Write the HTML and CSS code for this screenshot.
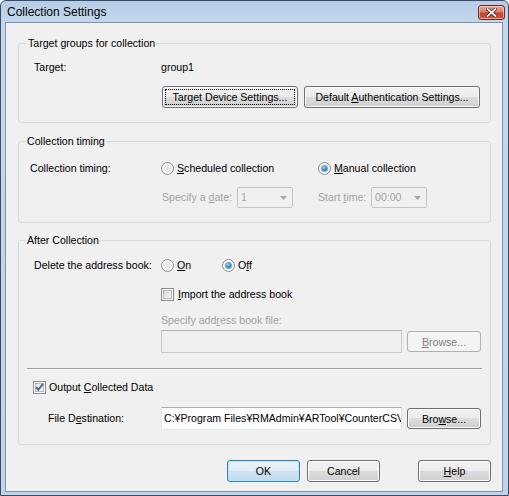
FILE: index.html
```html
<!DOCTYPE html>
<html lang="en">
<head>
<meta charset="utf-8">
<title>Collection Settings</title>
<link rel="stylesheet" href="styles.css">
</head>
<body>
<div class="window">
  <div class="titlebar">
    <span class="title">Collection Settings</span>
    <span class="close">
      <svg width="11" height="9" viewBox="0 0 11 9"><path d="M1.5 1 L9.5 8 M9.5 1 L1.5 8" stroke="#4a2222" stroke-width="3.4" stroke-linecap="square"/><path d="M1.5 1 L9.5 8 M9.5 1 L1.5 8" stroke="#ffffff" stroke-width="1.7" stroke-linecap="square"/></svg>
    </span>
  </div>
  <div class="client">
    <fieldset class="group g-target">
      <legend>Target groups for collection</legend>
      <div class="row r-target">
        <span class="lbl l-target">Target:</span>
        <span>group1</span>
      </div>
      <div class="row r-btns">
        <button class="btn focus w-device">Tar<u>g</u>et Device Settings...</button>
        <button class="btn w-auth">Default <u>A</u>uthentication Settings...</button>
      </div>
    </fieldset>

    <fieldset class="group g-timing">
      <legend>Collection timing</legend>
      <div class="row r-timing">
        <span class="lbl l-timing">Collection timing:</span>
        <span class="opt w-sched"><span class="radio"></span><span class="opt-text"><u>S</u>cheduled collection</span></span>
        <span class="opt"><span class="radio on"></span><span class="opt-text"><u>M</u>anual collection</span></span>
      </div>
      <div class="row r-date">
        <span class="opt w-sched dis">
          <span class="date-lbl">Specify a <u>d</u>ate:</span>
          <span class="combo"><span>1</span><svg width="7" height="4" viewBox="0 0 7 4"><path d="M0 0H7L3.5 4Z" fill="#a9a9a9"/></svg></span>
        </span>
        <span class="opt dis">
          <span class="time-lbl">Start <u>t</u>ime:</span>
          <span class="combo"><span>00:00</span><svg width="7" height="4" viewBox="0 0 7 4"><path d="M0 0H7L3.5 4Z" fill="#a9a9a9"/></svg></span>
        </span>
      </div>
    </fieldset>

    <fieldset class="group g-after">
      <legend>After Collection</legend>
      <div class="row r-delete">
        <span class="lbl l-delete">Delete the address book:</span>
        <span class="opt w-on"><span class="radio"></span><span class="opt-text"><u>O</u>n</span></span>
        <span class="opt"><span class="radio on"></span><span class="opt-text">O<u>f</u>f</span></span>
      </div>
      <div class="row r-import indent">
        <span class="opt"><span class="check"></span><span class="opt-text chk-text"><u>I</u>mport the address book</span></span>
      </div>
      <div class="row r-spec indent dis">Specify add<u>r</u>ess book file:</div>
      <div class="row r-file indent">
        <span class="textbox disabled"></span>
        <button class="btn browse" disabled><u>B</u>rowse...</button>
      </div>
      <div class="sep"></div>
      <div class="row r-output">
        <span class="opt"><span class="check checked"><svg width="11" height="11" viewBox="0 0 11 11"><path d="M2 5.2 L4.4 7.8 L9 1.8" fill="none" stroke="#4f66a0" stroke-width="2"/></svg></span><span class="opt-text">Output <u>C</u>ollected Data</span></span>
      </div>
      <div class="row r-dest">
        <span class="lbl l-dest">File D<u>e</u>stination:</span>
        <span class="textbox"><span class="tb-text">C:¥Program Files¥RMAdmin¥ARTool¥CounterCSV</span></span>
        <button class="btn browse">Bro<u>w</u>se...</button>
      </div>
    </fieldset>

    <div class="footer">
      <button class="btn default w-foot">OK</button>
      <button class="btn w-foot b-cancel">Cancel</button>
      <button class="btn w-foot b-help"><u>H</u>elp</button>
    </div>
  </div>
</div>
</body>
</html>
```

FILE: styles.css
```css
* { box-sizing: border-box; }

html, body {
  margin: 0;
  padding: 0;
}

body {
  width: 509px;
  height: 496px;
  overflow: hidden;
  background: #ffffff;
  font-family: "Liberation Sans", Arial, sans-serif;
  font-size: 10.6px;
  color: #000000;
}

.window {
  width: 509px;
  height: 496px;
  border: 1px solid #3b4c63;
  border-radius: 6px 6px 0 0;
  background: linear-gradient(#b7cde7 0px, #c3d7ed 22px, #bfd4eb 100%);
  display: flex;
  flex-direction: column;
}

.titlebar {
  height: 21px;
  flex: none;
  display: flex;
  align-items: flex-start;
  justify-content: space-between;
  padding: 0 3px 0 6px;
}

.title {
  font-size: 12px;
  line-height: 14px;
  margin-top: 4px;
}

.close {
  width: 27px;
  height: 15px;
  margin-top: 4px;
  border: 1px solid #6a2b2b;
  border-radius: 3px;
  background: linear-gradient(#e8a899 0%, #d88070 45%, #c3432f 55%, #cf5a3e 100%);
  box-shadow: inset 0 0 0 1px rgba(255, 220, 210, 0.55);
  display: flex;
  align-items: center;
  justify-content: center;
}

.client {
  flex: 1;
  margin: 0 5px 3px 4px;
  border: 1px solid #7d92ab;
  background: #f0f0f0;
  padding: 14px 11px 9px 12px;
  display: flex;
  flex-direction: column;
}

/* Group boxes */
.group {
  margin: 0;
  padding: 0 0 14px 0;
  border: 1px solid #d3dce2;
  border-radius: 3px;
  min-width: 0;
}

.group legend {
  margin-left: 7px;
  padding: 0 1px;
  line-height: 13px;
  height: 13px;
}

.g-target legend { margin-left: 8px; }
.g-timing { margin-top: 12px; }
.g-after { margin-top: 11px; }

.row {
  display: flex;
  align-items: center;
  height: 13px;
  line-height: 13px;
  white-space: nowrap;
}

.indent { padding-left: 142px; }

.lbl { flex: none; }

.dis { color: #a3a3a3; }

/* Target group */
.r-target { margin-top: 11px; padding-left: 15px; }
.l-target { width: 127px; }

.r-btns {
  margin-top: 12px;
  height: 22px;
  padding-left: 143px;
  gap: 6px;
}
.w-device { width: 136px; }
.w-auth { width: 176px; }

/* Timing group */
.r-timing { margin-top: 14px; padding-left: 11px; }
.l-timing { width: 131px; }

.opt {
  display: flex;
  align-items: center;
  flex: none;
}
.w-sched { width: 157px; }
.opt-text { margin-left: 3px; }
.chk-text { margin-left: 4px; }

.r-date {
  margin-top: 12px;
  height: 21px;
  padding-left: 142px;
}
.date-lbl { width: 76px; padding-left: 1px; }
.time-lbl { width: 53px; }

.combo {
  width: 56px;
  height: 21px;
  border: 1px solid #c2c4c6;
  border-radius: 2px;
  background: #f0f0f0;
  display: flex;
  align-items: center;
  justify-content: space-between;
  padding: 0 5px 0 3px;
  color: #a3a3a3;
}

/* Radio */
.radio {
  width: 13px;
  height: 13px;
  flex: none;
  border-radius: 50%;
  border: 1px solid #8d8f91;
  background: radial-gradient(circle at 50% 50%, #e2e3e5 0, #eeeeef 45%, #fbfbfb 80%);
  box-shadow: inset 0 0 0 1px #f7f7f7;
  display: flex;
  align-items: center;
  justify-content: center;
}
.radio.on::after {
  content: "";
  width: 5px;
  height: 5px;
  border-radius: 50%;
  background: radial-gradient(circle at 40% 35%, #a6e0fa 0, #2a8bc9 50%, #0c4f86 100%);
  box-shadow: 0 0 0 1px #7fa6c6;
}

/* Checkbox */
.check {
  width: 13px;
  height: 13px;
  flex: none;
  border: 1px solid #8e8f8f;
  background: linear-gradient(135deg, #cdd0d4 0%, #eceded 60%, #f8f8f8 100%);
  box-shadow: inset 0 0 0 1px #f6f6f6, inset 0 0 0 2px #b8bcc0;
  display: flex;
  align-items: center;
  justify-content: center;
}
.check.checked {
  background: linear-gradient(135deg, #dcdee1 0%, #f2f2f2 60%, #fbfbfb 100%);
}

/* After collection group */
.r-delete { margin-top: 12px; padding-left: 15px; }
.l-delete { width: 127px; }
.w-on { width: 61px; }

.r-import { margin-top: 16px; }
.r-spec { margin-top: 13px; }

.r-file {
  margin-top: 3px;
  height: 23px;
}

.textbox {
  width: 241px;
  height: 23px;
  flex: none;
  border: 1px solid #dbdfe6;
  border-top-color: #abadb3;
  border-left-color: #e2e3ea;
  border-bottom-color: #e3e9ef;
  background: #ffffff;
  display: flex;
  align-items: center;
  padding-left: 2px;
  overflow: hidden;
}
.textbox.disabled {
  background: #f0f0f0;
  border-color: #c7c9cc;
  border-top-color: #b1b3b7;
}
.tb-text { white-space: nowrap; }

.sep {
  margin: 15px 8px 0 8px;
  height: 2px;
  border-top: 1px solid #a0a0a0;
  border-bottom: 1px solid #ffffff;
}

.r-output { margin-top: 11px; padding-left: 14px; }

.r-dest {
  margin-top: 13px;
  height: 23px;
  padding-left: 29px;
}
.l-dest { width: 113px; }

/* Buttons */
.btn {
  height: 22px;
  padding: 0;
  margin: 0;
  border: 1px solid #707070;
  border-radius: 3px;
  background: linear-gradient(#f2f2f2 0%, #ebebeb 50%, #dddddd 50%, #cfcfcf 100%);
  box-shadow: inset 0 0 0 1px #fbfbfb;
  font-family: "Liberation Sans", Arial, sans-serif;
  font-size: 10.6px;
  color: #000000;
  white-space: nowrap;
  flex: none;
}

.btn.focus {
  outline: 1px dotted #000000;
  outline-offset: -4px;
}

.browse {
  width: 74px;
  height: 21px;
  margin-left: 5px;
}
.btn:disabled {
  border-color: #adb2b5;
  background: #f4f4f4;
  box-shadow: none;
  color: #838383;
}

.footer {
  margin-top: 15px;
  height: 22px;
  flex: none;
  display: flex;
  justify-content: flex-end;
}
.w-foot { width: 73px; }
.b-cancel { margin-left: 7px; }
.b-help { margin-left: 38px; }

.btn.default {
  border-color: #3c7fb1;
  background: linear-gradient(#eaf4fa 0%, #e0eef7 50%, #cfe4f2 50%, #c1dbee 100%);
  box-shadow: inset 0 0 0 1px #b8e2f8;
}
```
